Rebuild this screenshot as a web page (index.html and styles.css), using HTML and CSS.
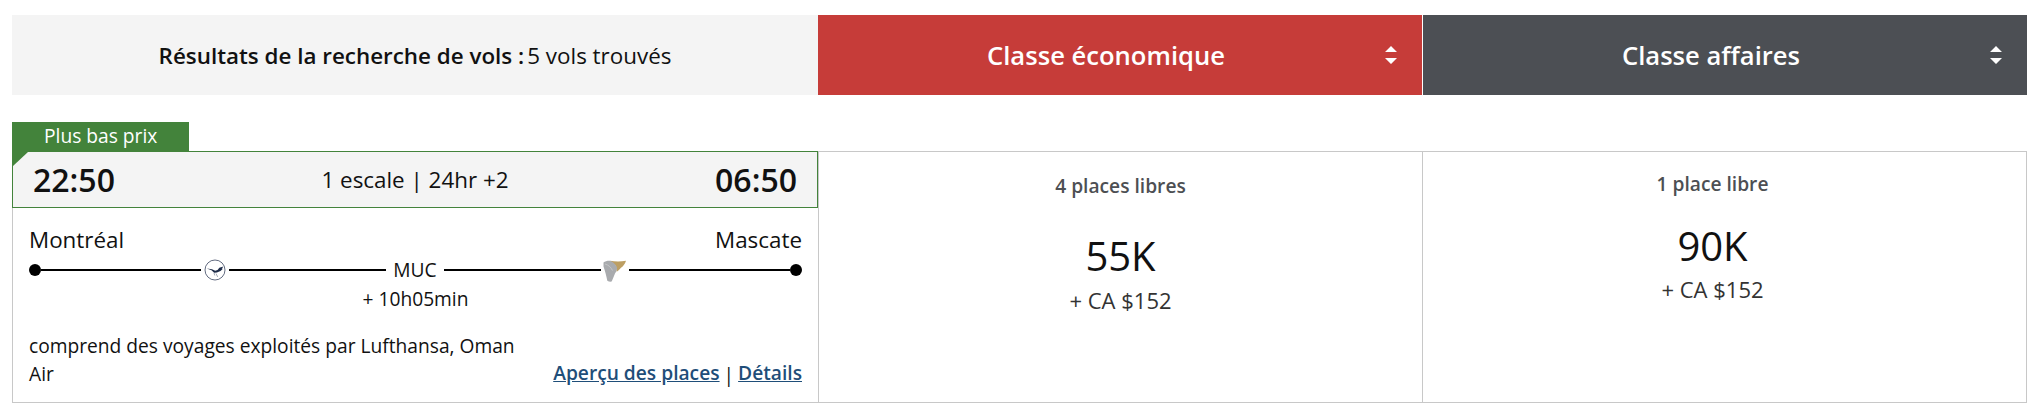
FILE: index.html
```html
<!DOCTYPE html>
<html lang="fr">
<head>
<meta charset="utf-8">
<title>Résultats de la recherche de vols</title>
<link rel="stylesheet" href="styles.css">
</head>
<body>
<main class="page">
  <header class="head">
    <div class="summary"><strong>Résultats de la recherche de vols :</strong> 5 vols trouvés</div>
    <button class="cabin eco"><span>Classe économique</span>
      <svg class="sort" viewBox="0 0 12 18"><path d="M6 0l6 6H0zM6 18l-6-6h12z"/></svg></button>
    <button class="cabin biz"><span>Classe affaires</span>
      <svg class="sort" viewBox="0 0 12 18"><path d="M6 0l6 6H0zM6 18l-6-6h12z"/></svg></button>
  </header>
  <div class="badge">Plus bas prix</div>
  <section class="result">
    <div class="flight">
      <div class="times">
        <b class="time">22:50</b>
        <span class="stops">1 escale | 24hr +2</span>
        <b class="time">06:50</b>
      </div>
      <div class="body">
        <div class="cities"><span>Montréal</span><span>Mascate</span></div>
        <div class="route">
          <i class="dot"></i><i class="line l1"></i>
          <svg class="logo" viewBox="0 0 22 22"><circle cx="11" cy="11" r="10" fill="#fff" stroke="#3a4560" stroke-width=".8"/><path d="M2.800 9.600l5.200.6 3.200 1.500 2.400-.6 1.700-2.300 4.200-1.300-1.800 2.300 1.200-.1-2.400 2.300-3.600 1.600-2.800.2-2.600-2.500z" fill="#1d2b48"/><path d="M12 14.500l1.700 3.500M10 14l.8 2.500" fill="none" stroke="#6a7488" stroke-width=".6"/></svg>
          <i class="line l2"></i><span class="stop">MUC</span><i class="line l3"></i>
          <svg class="logo" viewBox="0 0 22 22"><path d="M6 1.800c5 .8 11 .9 16-.1-1 3.200-2.600 5.300-5 7-1.300 1.600-2.700 3-4.300 4l-1-6z" fill="#bd9f63"/><path d="M-.5 3.500C1 2 4 1.500 6 1.700c3 1.200 5.500 3.400 6.900 6.300.3 2.400-.4 4.600-1.900 6.500-1.200 2.600-2 5.200-3.300 8.100-1.700.2-3.200-.1-4.400-.8C2.600 17.500 1 12 -.5 7.500z" fill="#a9abae"/><path d="M1 5c3.500 1 6 3.200 7.500 6.500" fill="none" stroke="#c9cacc" stroke-width=".8"/></svg>
          <i class="line l4"></i><i class="dot"></i>
        </div>
        <div class="layover">+ 10h05min</div>
        <div class="foot">
          <p class="ops">comprend des voyages exploités par Lufthansa, Oman Air</p>
          <p class="links"><a href="#">Aperçu des places</a><span class="sep">|</span><a href="#">Détails</a></p>
        </div>
      </div>
    </div>
    <div class="fare f-eco">
      <div class="seats">4 places libres</div>
      <div class="miles">55K</div>
      <div class="tax">+ CA $152</div>
    </div>
    <div class="fare f-biz">
      <div class="seats">1 place libre</div>
      <div class="miles">90K</div>
      <div class="tax">+ CA $152</div>
    </div>
  </section>
</main>
</body>
</html>
```
FILE: styles.css
```css
* { box-sizing: border-box; }
html, body { margin: 0; background: #fff; }
body { font-family: "Open Sans", "Noto Sans", sans-serif; color: #111; }
.page { width: 2027px; padding: 15px 0 0 12px; }
.head { display: grid; grid-template-columns: 806px 604px 1fr; height: 80px; }
.summary { background: #f4f4f4; display: flex; align-items: center; justify-content: center; gap: 3px; font-size: 22.4px; }
.summary strong { font-weight: 600; }
.cabin { border: 0; margin: 0; padding: 0 25px 0 9px; display: flex; align-items: center; color: #fff; font: 600 25.6px "Open Sans", sans-serif; }
.cabin span { flex: 1; }
.eco { background: #c63c39; }
.biz { background: #4c4f54; border-left: 1px solid #fff; }
.sort { width: 12px; height: 18px; fill: #fff; }
.badge { width: 177px; height: 29px; margin-top: 27px; background: #43833b; color: #fff; font-size: 19.2px; line-height: 27px; padding-left: 32px; }
.result { display: grid; grid-template-columns: 806px 604px 1fr; height: 252px; border: 1px solid #c8c8c8; border-left: 0; }
.flight { display: flex; flex-direction: column; border-left: 1px solid #c8c8c8; min-width: 0; }
.times { position: relative; height: 57px; margin: -1px 0 0 -1px; background: #f4f4f4; border: 1px solid #43833b; display: flex; align-items: center; justify-content: space-between; padding: 0 20px; flex: none; }
.times::before { content: ""; position: absolute; left: 0; top: 0; border-style: solid; border-width: 14px 15px 0 0; border-color: #43833b transparent transparent transparent; }
.time { font-size: 32px; font-weight: 600; color: #111; }
.stops { font-size: 22.4px; }
.body { padding: 0 16px; flex: 1; display: flex; flex-direction: column; }
.cities { display: flex; justify-content: space-between; font-size: 22.4px; line-height: 29px; margin-top: 17px; }
.route { display: flex; align-items: center; height: 24px; margin-top: 4px; }
.dot { width: 12px; height: 12px; border-radius: 50%; background: #000; flex: none; }
.line { height: 2px; background: #000; flex: 1; }
.l1 { flex: 0 0 160px; }
.l2 { flex: 0 0 157px; }
.l3 { flex: 0 0 157px; }
.l4 { flex: 1; }
.logo { width: 22px; height: 22px; margin: 0 3px; flex: none; overflow: visible; }
.stop { width: 58px; text-align: center; font-size: 19.2px; line-height: 24px; flex: none; }
.layover { text-align: center; font-size: 19.2px; line-height: 24px; margin-top: 5px; }
.foot { display: flex; justify-content: space-between; align-items: flex-end; margin-top: 21px; }
.ops { width: 505px; margin: 0; font-size: 19.2px; line-height: 28px; }
.links { margin: 0 0 -1px; font-size: 19.2px; font-weight: 600; line-height: 28px; white-space: nowrap; }
.links a { color: #1f4e79; }
.sep { font-weight: 400; margin: 0 4px; color: #111; vertical-align: -2px; }
.fare { text-align: center; border-left: 1px solid #c8c8c8; }
.seats { font-size: 19.2px; font-weight: 600; color: #4d4f53; }
.miles { font-size: 40px; line-height: 52px; }
.tax { font-size: 22px; line-height: 28px; color: #333; }
.f-eco { padding-top: 20px; }
.f-eco .miles { margin-top: 31px; }
.f-eco .tax { margin-top: 4px; }
.f-biz { padding: 18px 24px 0 0; }
.f-biz .miles { margin-top: 23px; }
.f-biz .tax { margin-top: 3px; }
```
